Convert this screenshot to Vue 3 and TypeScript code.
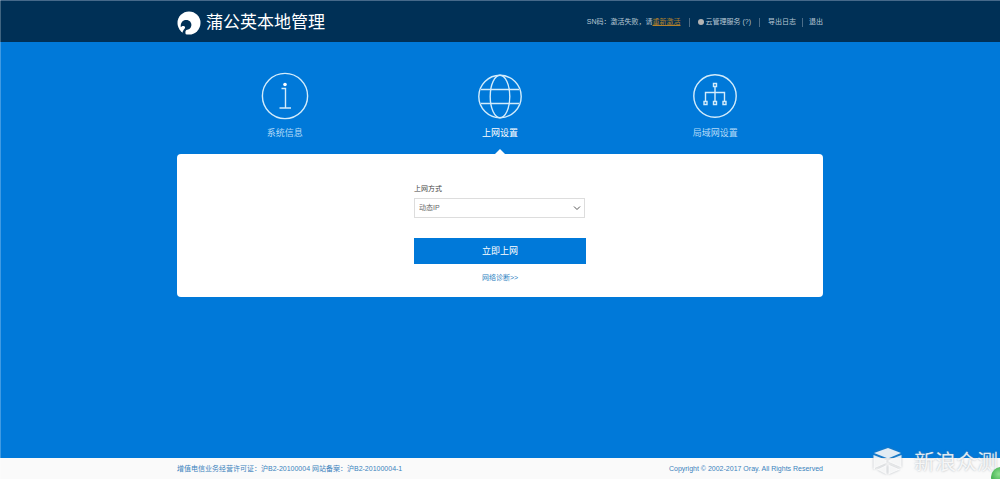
<script setup lang="ts">
import { ref } from 'vue'

type Tab = 'info' | 'wan' | 'lan'

const tabs: { id: Tab; label: string }[] = [
  { id: 'info', label: '系统信息' },
  { id: 'wan', label: '上网设置' },
  { id: 'lan', label: '局域网设置' },
]
const active = ref<Tab>('wan')
const mode = ref('动态IP')
const modes = ['动态IP', '静态IP', '宽带拨号']
</script>

<template>
  <div class="page">
    <header class="header">
      <div class="wrap header-row">
        <h1 class="brand">
          <svg class="logo" viewBox="0 0 24 24" aria-hidden="true">
            <circle cx="12" cy="12" r="11.5" fill="#fff" />
            <path
              d="M3.8 16.2C3.2 11.6 5.8 8.9 9.2 8.9C12.6 8.9 14.6 11.4 14.4 14.2C14.2 17.2 11.8 18.8 9.4 18.9C8.2 19.6 8.2 21.4 8.8 23.6L5.4 22.4C5.4 20.6 6.4 19 7.4 18C8.6 16.8 8.2 15.2 6.8 15C5.4 14.9 4.6 15.4 3.8 16.2Z"
              fill="#003056"
            />
          </svg>
          <span>蒲公英本地管理</span>
        </h1>
        <div class="tools">
          <span>SN码：激活失败，请<a class="activate" href="#activate">重新激活</a></span>
          <i class="bar"></i>
          <span class="cloud"><i class="dot"></i>云管理服务 (?)</span>
          <i class="bar"></i>
          <a href="#log">导出日志</a>
          <i class="bar tight"></i>
          <a href="#logout">退出</a>
        </div>
      </div>
    </header>

    <main class="wrap main">
      <nav class="tabs">
        <button
          v-for="tab in tabs"
          :key="tab.id"
          type="button"
          class="tab"
          :class="{ active: active === tab.id }"
          @click="active = tab.id"
        >
          <svg v-if="tab.id === 'info'" class="icon" viewBox="0 0 48 48" aria-hidden="true">
            <circle cx="24" cy="24" r="22.6" />
            <circle cx="24" cy="12.5" r="1.8" class="solid" />
            <path d="M20.5 16.5H24.5V36M18.5 36H30" />
          </svg>
          <svg v-else-if="tab.id === 'wan'" class="icon" viewBox="0 0 48 48" aria-hidden="true">
            <circle cx="24" cy="24.5" r="21.2" />
            <ellipse cx="24" cy="24.5" rx="9.8" ry="21.2" />
            <path d="M5 17.5H43M5 31.5H43" />
          </svg>
          <svg v-else class="icon" viewBox="0 0 48 48" aria-hidden="true">
            <circle cx="24" cy="24" r="21.2" />
            <path d="M22.5 11.5h3v3h-3zM13 29.5h3v3h-3zM22.5 29.5h3v3h-3zM32 29.5h3v3h-3z" />
            <path d="M24 15V29M14.5 29V20.5H33.5V29" />
          </svg>
          <span>{{ tab.label }}</span>
        </button>
      </nav>

      <section class="card">
        <form class="form" @submit.prevent>
          <label for="mode">上网方式</label>
          <div class="select">
            <select id="mode" v-model="mode">
              <option v-for="m in modes" :key="m">{{ m }}</option>
            </select>
            <svg class="chevron" viewBox="0 0 8 6" aria-hidden="true">
              <path d="M1 1.5L4 4.5L7 1.5" />
            </svg>
          </div>
          <button type="submit" class="submit">立即上网</button>
          <a class="diagnose" href="#diagnose">网络诊断&gt;&gt;</a>
        </form>
      </section>
    </main>

    <footer class="footer">
      <div class="wrap footer-row">
        <span>增值电信业务经营许可证：沪B2-20100004 网站备案：沪B2-20100004-1</span>
        <span>Copyright © 2002-2017 Oray. All Rights Reserved</span>
      </div>
    </footer>

    <div class="watermark">
      <svg class="cube" viewBox="0 0 30 28" aria-hidden="true">
        <path d="M15 0L28 5L15 10.5L1 5Z" fill="#fff" fill-opacity="0.85" />
        <path d="M0.5 7L13.5 12V15L2 20V21.5L0.5 21Z" fill="#fff" fill-opacity="0.85" />
        <path d="M4 21.5L13.5 17V26.5Z" fill="#fff" fill-opacity="0.85" />
        <path d="M15.5 12L28.5 7V19.5L15.5 14Z" fill="#fff" fill-opacity="0.85" />
        <path d="M15.5 16.5L27 21.5L15.5 26.5Z" fill="#fff" fill-opacity="0.85" />
      </svg>
      <span>新浪众测</span>
    </div>
    <div class="ball"></div>
  </div>
</template>

<style>
body {
  margin: 0;
}
</style>

<style scoped>
.page {
  position: relative;
  display: flex;
  flex-direction: column;
  min-height: 100vh;
  overflow: hidden;
  background: #0079d9;
  font-family: "Liberation Sans", "Noto Sans CJK SC", sans-serif;
  font-size: 7px;
  line-height: 12px;
}
.page::before {
  content: "";
  position: absolute;
  top: 0;
  bottom: 0;
  left: 0;
  width: 1px;
  background: rgba(255, 255, 255, 0.25);
}
.wrap {
  width: 100%;
  max-width: 646px;
  margin: 0 auto;
}
.header {
  display: flex;
  box-sizing: border-box;
  height: 42px;
  border-top: 1px solid #46698a;
  background: #003056;
}
.header-row,
.brand,
.tools,
.cloud,
.footer-row {
  display: flex;
  align-items: center;
}
.header-row,
.footer-row {
  justify-content: space-between;
}
.brand {
  gap: 5px;
  margin: 0;
  padding-top: 2px;
  color: #fff;
  font-size: 17px;
  font-weight: 400;
  line-height: 24px;
}
.logo {
  width: 24px;
  height: 24px;
}
.tools {
  gap: 8px;
  padding-top: 1px;
  color: #b9c8d5;
}
.tools a {
  color: inherit;
  text-decoration: none;
}
.tools .activate {
  color: #b5822a;
  text-decoration: underline;
}
.cloud {
  gap: 2px;
}
.bar {
  width: 1px;
  height: 9px;
  background: #4b6c88;
}
.bar.tight {
  margin: 0 -2px;
}
.dot {
  width: 6px;
  height: 6px;
  border-radius: 50%;
  background: #b4b4b4;
}
.main {
  flex: 1;
}
.tabs {
  display: grid;
  grid-template-columns: repeat(3, 1fr);
}
.tab {
  position: relative;
  display: flex;
  flex-direction: column;
  align-items: center;
  gap: 6px;
  height: 112px;
  padding: 30px 0 0;
  border: 0;
  background: none;
  color: #b5dbf8;
  font-family: inherit;
  font-size: 9px;
  line-height: 14px;
  cursor: pointer;
}
.tab.active {
  color: #fff;
}
.tab.active::after {
  content: "";
  position: absolute;
  bottom: 0;
  left: 50%;
  margin-left: -5px;
  border: 5px solid transparent;
  border-top: 0;
  border-bottom-color: #fff;
}
.icon {
  width: 48px;
  height: 48px;
  fill: none;
  stroke: #d3ecfb;
  stroke-width: 1.4;
}
.icon .solid {
  fill: #fff;
  stroke: none;
}
.card {
  padding: 29px 20px 13px;
  border-radius: 4px;
  background: #fff;
}
.form {
  display: flex;
  flex-direction: column;
  max-width: 172px;
  margin: 0 auto;
}
.form label {
  color: #444;
}
.select {
  position: relative;
  margin: 3px 1px 20px 0;
}
.select select {
  display: block;
  width: 100%;
  height: 20px;
  padding: 0 4px;
  border: 1px solid #ddd;
  border-radius: 0;
  appearance: none;
  background: #fff;
  color: #666;
  font: inherit;
}
.chevron {
  position: absolute;
  top: 7px;
  right: 4px;
  width: 8px;
  height: 6px;
  fill: none;
  stroke: #555;
  pointer-events: none;
}
.submit {
  height: 26px;
  padding: 0 0 2px;
  border: 0;
  background: #0079d9;
  color: #fff;
  font-family: inherit;
  font-size: 9px;
  cursor: pointer;
}
.diagnose {
  align-self: center;
  margin-top: 8px;
  color: #2c7fbf;
  text-decoration: none;
}
.footer {
  display: flex;
  height: 21px;
  background: #fafafa;
  color: #3a83bd;
}
.watermark {
  position: absolute;
  right: 2px;
  bottom: 3px;
  display: flex;
  align-items: center;
  gap: 11px;
  color: rgba(255, 255, 255, 0.85);
  font-size: 21px;
  line-height: 28px;
  text-shadow: 0 0 2px rgba(120, 130, 140, 0.6);
  pointer-events: none;
}
.cube {
  width: 30px;
  height: 28px;
  filter: drop-shadow(0 0 1px rgba(120, 130, 140, 0.6));
}
.ball {
  position: absolute;
  right: -11px;
  bottom: -8px;
  width: 20px;
  height: 20px;
  border-radius: 50%;
  background: radial-gradient(circle at 40% 35%, #8fe08f, #35a845 60%, #1f8a35);
}
</style>
